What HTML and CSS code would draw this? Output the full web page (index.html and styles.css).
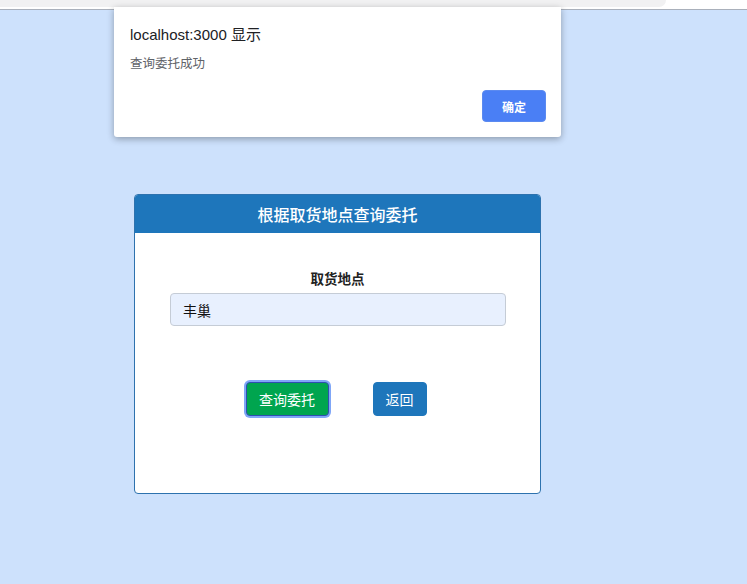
FILE: index.html
```html
<!DOCTYPE html>
<html lang="zh-CN">
<head>
<meta charset="utf-8">
<title>根据取货地点查询委托</title>
<link rel="stylesheet" href="styles.css">
</head>
<body>
<div class="chrome"><div class="chrome-pill"></div></div>
<main class="page">
  <section class="card">
    <header class="card-header">根据取货地点查询委托</header>
    <div class="card-body">
      <label class="field-label" for="place">取货地点</label>
      <input class="field-input" id="place" type="text" value="丰巢">
      <div class="actions">
        <button class="btn btn-green" type="button">查询委托</button>
        <button class="btn btn-blue" type="button">返回</button>
      </div>
    </div>
  </section>
</main>
<div class="dialog">
  <div class="dialog-title">localhost:3000 显示</div>
  <div class="dialog-msg">查询委托成功</div>
  <div class="dialog-actions"><button class="dialog-btn" type="button">确定</button></div>
</div>
</body>
</html>
```
FILE: styles.css
```css
html, body {
  margin: 0;
  padding: 0;
}
body {
  background: #cde1fc;
  width: 747px;
  height: 584px;
  overflow: hidden;
  font-family: "Liberation Sans", "Noto Sans CJK SC", sans-serif;
  position: relative;
}
.chrome {
  height: 9px;
  background: #ffffff;
  border-bottom: 1px solid #a9b0bb;
}
.chrome-pill {
  width: 666px;
  height: 7px;
  background: #f1f1f2;
  border-radius: 0 0 8px 0;
}
.page {
  padding-top: 184px;
  padding-left: 134px;
}
.card {
  width: 405px;
  height: 298px;
  background: #ffffff;
  border: 1px solid #2d72ae;
  border-radius: 4px;
  overflow: hidden;
}
.card-header {
  height: 38px;
  background: #1e76bb;
  color: #ffffff;
  font-family: "Noto Sans CJK SC", sans-serif;
  font-size: 16px;
  font-weight: 500;
  line-height: 38px;
  text-align: center;
}
.card-body {
  display: flex;
  flex-direction: column;
  align-items: center;
  padding-top: 35px;
}
.field-label {
  font-family: "Noto Sans CJK SC", sans-serif;
  font-size: 13.5px;
  font-weight: 700;
  color: #222;
  line-height: 20px;
  margin-bottom: 5px;
}
.field-input {
  box-sizing: border-box;
  width: 336px;
  height: 33px;
  margin-left: 1px;
  padding: 0 12px;
  background: #e8f0fe;
  border: 1px solid #c5ccd6;
  border-radius: 4px;
  font-family: "Noto Sans CJK SC", sans-serif;
  font-size: 14px;
  color: #111;
  outline: none;
}
.actions {
  display: flex;
  gap: 44px;
  margin-top: 56px;
  margin-left: -3px;
}
.btn {
  box-sizing: border-box;
  height: 34px;
  border-radius: 4px;
  font-family: "Noto Sans CJK SC", sans-serif;
  font-size: 14px;
  color: #ffffff;
  padding: 0;
  cursor: pointer;
}
.btn-green {
  width: 83px;
  background: #00a54f;
  border: 1px solid #2e4fb0;
  box-shadow: 0 0 0 2px #7fa6f7;
}
.btn-blue {
  width: 54px;
  background: #1e76bb;
  border: 1px solid #1e76bb;
}
.dialog {
  position: absolute;
  left: 114px;
  top: 7px;
  width: 447px;
  height: 130px;
  box-sizing: border-box;
  background: #ffffff;
  border-radius: 0 0 3px 3px;
  box-shadow: 0 2px 7px rgba(0, 0, 0, 0.32);
  padding: 18px 16px 0 16px;
}
.dialog-title {
  font-family: "Liberation Sans", "Noto Sans CJK SC", sans-serif;
  font-size: 15px;
  color: #202124;
  line-height: 20px;
}
.dialog-msg {
  margin-top: 9px;
  font-family: "Noto Sans CJK SC", sans-serif;
  font-size: 12.5px;
  color: #5f6368;
  line-height: 18px;
}
.dialog-actions {
  display: flex;
  justify-content: flex-end;
  margin-top: 18px;
}
.dialog-btn {
  width: 64px;
  height: 32px;
  margin-right: -1px;
  background: #4a7ff5;
  border: 1px solid #5b8af0;
  border-radius: 4px;
  color: #ffffff;
  font-family: "Noto Sans CJK SC", sans-serif;
  font-size: 12px;
  font-weight: 700;
  padding: 0;
}
```
